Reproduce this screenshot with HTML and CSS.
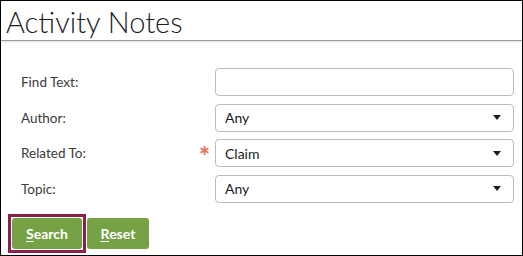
FILE: index.html
```html
<!DOCTYPE html>
<html>
<head>
<meta charset="utf-8">
<link rel="stylesheet" href="styles.css">
</head>
<body>
<div class="panel">
  <div class="header"><h1 class="title">Activity Notes</h1></div>
  <form class="form">
    <div class="row">
      <label class="label">Find Text:</label>
      <span class="req"></span>
      <div class="field"></div>
    </div>
    <div class="row">
      <label class="label">Author:</label>
      <span class="req"></span>
      <div class="field select"><span class="value">Any</span><span class="caret"></span></div>
    </div>
    <div class="row">
      <label class="label">Related To:</label>
      <span class="req"><svg width="9" height="9" viewBox="0 0 9 9"><g stroke="#e8705e" stroke-width="1.8" stroke-linecap="butt"><line x1="4.5" y1="0" x2="4.5" y2="9"/><line x1="0.6" y1="2.25" x2="8.4" y2="6.75"/><line x1="0.6" y1="6.75" x2="8.4" y2="2.25"/></g></svg></span>
      <div class="field select"><span class="value">Claim</span><span class="caret"></span></div>
    </div>
    <div class="row">
      <label class="label">Topic:</label>
      <span class="req"></span>
      <div class="field select"><span class="value">Any</span><span class="caret"></span></div>
    </div>
  </form>
  <div class="buttons">
    <span class="focus-ring"><button class="btn search"><u>S</u>earch</button></span>
    <button class="btn reset"><u>R</u>eset</button>
  </div>
</div>
</body>
</html>
```
FILE: styles.css
```css
* { box-sizing: border-box; }
html, body { margin: 0; padding: 0; background: #fff; }
body { font-family: Lato, "Liberation Sans", sans-serif; }
.panel {
  width: 523px;
  height: 256px;
  border: 1px solid #000;
  display: flex;
  flex-direction: column;
}
.header {
  height: 40px;
  border-bottom: 1px solid #9a9a9a;
  box-shadow: 0 1px 2px rgba(0,0,0,0.12);
  padding-left: 5px;
  display: flex;
  align-items: flex-end;
}
.title {
  margin: 0;
  font-size: 29px;
  font-weight: 300;
  color: #1c1c24;
  line-height: 37px;
}
.form {
  margin: 0;
  padding: 27px 8px 0 20px;
  display: flex;
  flex-direction: column;
  gap: 7.67px;
}
.row {
  display: flex;
  align-items: center;
  height: 28px;
}
.label {
  flex: 1;
  font-size: 13.5px;
  color: #3b3b3b;
}
.req {
  width: 15px;
  height: 28px;
  display: flex;
  align-items: center;
  padding-bottom: 5px;
  margin-left: -1px;
}
.field {
  width: 299px;
  height: 28px;
  border: 1px solid #bcbcbc;
  border-radius: 4px;
  display: flex;
  align-items: center;
  padding: 0 12px 0 9px;
}
.value {
  flex: 1;
  font-size: 14px;
  color: #1a1a1a;
}
.caret {
  width: 0;
  height: 0;
  border-left: 4px solid transparent;
  border-right: 4px solid transparent;
  border-top: 5px solid #1e1e1e;
}
.buttons {
  display: flex;
  align-items: center;
  gap: 1px;
  padding: 11px 0 0 7px;
}
.focus-ring {
  display: flex;
  border: 3px solid #8c2048;
  padding: 1px;
}
.btn {
  height: 31px;
  border: 0;
  border-radius: 3px;
  background: #76a245;
  color: #fff;
  font-family: Lato, "Liberation Sans", sans-serif;
  font-weight: 700;
  font-size: 14px;
  padding: 0;
  margin: 0;
}
.search { width: 70px; }
.reset { width: 62px; }
.btn u { text-decoration-thickness: 1px; text-underline-offset: 2px; }
```
